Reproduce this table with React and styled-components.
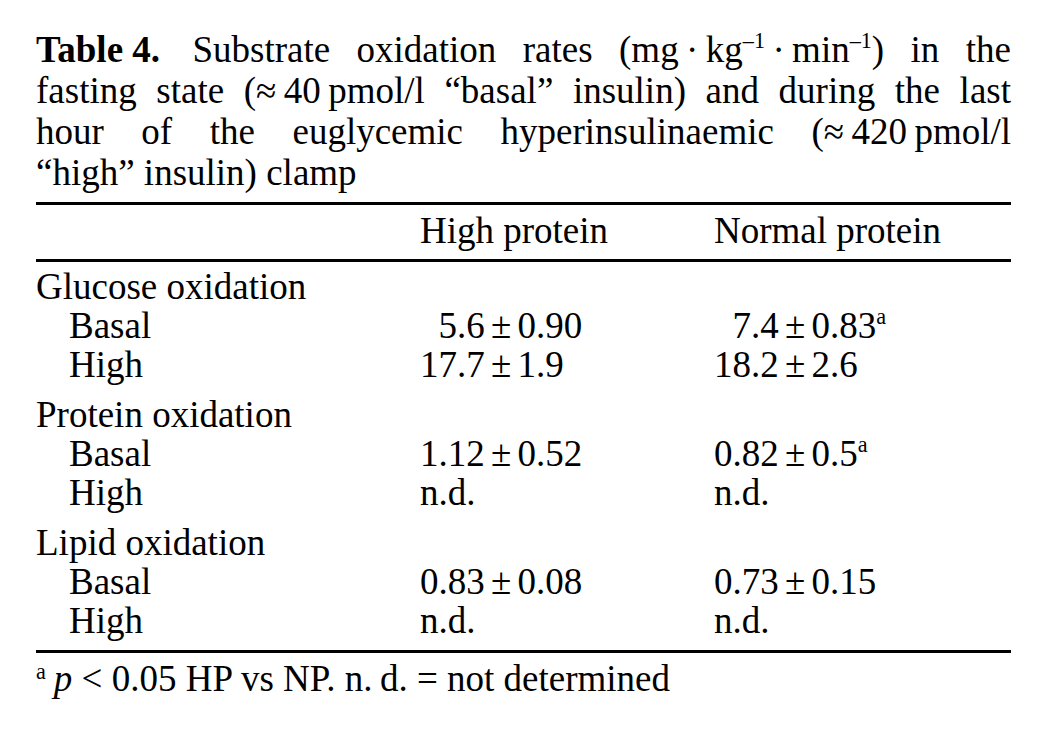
import styled, { createGlobalStyle } from 'styled-components';

const GlobalStyle = createGlobalStyle`
  html, body {
    margin: 0;
    padding: 0;
    background: #fff;
  }
  body {
    font-family: "Liberation Serif", "Times New Roman", serif;
    color: #000;
  }
`;

// Page wrapper
const Page = styled.div`
  width: 1040px;
  height: 744px;
  box-sizing: border-box;
  padding: 29px 29px 0 36px;
  font-size: 37px;
`;

const Caption = styled.div`
  line-height: 41px;
  margin-bottom: 9px;
`;

const CaptionLine = styled.div`
  text-align: ${p => (p.$last ? 'left' : 'justify')};
  text-align-last: ${p => (p.$last ? 'left' : 'justify')};
  white-space: nowrap;
`;

const Bold = styled.b`
  display: inline-block;
  font-weight: 700;
  margin-right: 6px;
`;

const Sup = styled.sup`
  font-size: 0.6em;
  line-height: 0;
  vertical-align: 0.62em;
`;

const Rule = styled.div`
  height: 3px;
  background: #000;
`;

const HeadRow = styled.div`
  display: grid;
  grid-template-columns: 384px 294px 1fr;
  height: 54px;
  box-sizing: border-box;
  padding-top: 6px;
  align-items: start;
  line-height: 39px;
`;

const Body = styled.div`
  padding: 5px 0 10px;
  display: flex;
  flex-direction: column;
  gap: 11px;
`;

const Group = styled.div`
  display: flex;
  flex-direction: column;
`;

const Row = styled.div`
  display: grid;
  grid-template-columns: 384px 294px 1fr;
  line-height: 39px;
  height: 39px;
`;

const Label = styled.div`
  padding-left: ${p => (p.$sub ? '33px' : '0')};
`;

const Value = styled.div`
  padding-left: ${p => (p.$pad ? '0.5em' : '0')};
  word-spacing: -3px;
`;

const Note = styled.div`
  margin-top: 6px;
  line-height: 40px;
`;

const NoteMark = styled.sup`
  font-size: 0.6em;
  line-height: 0;
  vertical-align: 0.55em;
  margin-right: 8px;
`;

const groups = [
  {
    name: 'Glucose oxidation',
    rows: [
      { label: 'Basal', hp: '5.6 ± 0.90', hpPad: true, np: '7.4 ± 0.83', npPad: true, npSig: true },
      { label: 'High', hp: '17.7 ± 1.9', np: '18.2 ± 2.6' },
    ],
  },
  {
    name: 'Protein oxidation',
    rows: [
      { label: 'Basal', hp: '1.12 ± 0.52', np: '0.82 ± 0.5', npSig: true },
      { label: 'High', hp: 'n.d.', np: 'n.d.' },
    ],
  },
  {
    name: 'Lipid oxidation',
    rows: [
      { label: 'Basal', hp: '0.83 ± 0.08', np: '0.73 ± 0.15' },
      { label: 'High', hp: 'n.d.', np: 'n.d.' },
    ],
  },
];

const App = () => {
  return (
    <Page>
      <GlobalStyle />
      <Caption>
        <CaptionLine>
          <Bold>Table 4.</Bold> Substrate oxidation rates (mg{'\u2009·\u2009'}kg<Sup>–1</Sup>{'\u2009·\u2009'}min<Sup>–1</Sup>) in the
        </CaptionLine>
        <CaptionLine>
          fasting state (≈{'\u2009'}40{'\u2009'}pmol/l “basal” insulin) and during the last
        </CaptionLine>
        <CaptionLine>
          hour of the euglycemic hyperinsulinaemic (≈{'\u2009'}420{'\u2009'}pmol/l
        </CaptionLine>
        <CaptionLine $last>“high” insulin) clamp</CaptionLine>
      </Caption>

      <Rule />
      <HeadRow>
        <div />
        <div>High protein</div>
        <div>Normal protein</div>
      </HeadRow>
      <Rule />

      <Body>
        {groups.map(g => (
          <Group key={g.name}>
            <Row>
              <Label>{g.name}</Label>
            </Row>
            {g.rows.map(r => (
              <Row key={r.label}>
                <Label $sub>{r.label}</Label>
                <Value $pad={r.hpPad}>{r.hp}</Value>
                <Value $pad={r.npPad}>
                  {r.np}
                  {r.npSig && <Sup>a</Sup>}
                </Value>
              </Row>
            ))}
          </Group>
        ))}
      </Body>
      <Rule />

      <Note>
        <NoteMark>a</NoteMark>
        <i>p</i> &lt; 0.05 HP vs NP. n.{'\u2009'}d. = not determined
      </Note>
    </Page>
  );
};

export default App;
